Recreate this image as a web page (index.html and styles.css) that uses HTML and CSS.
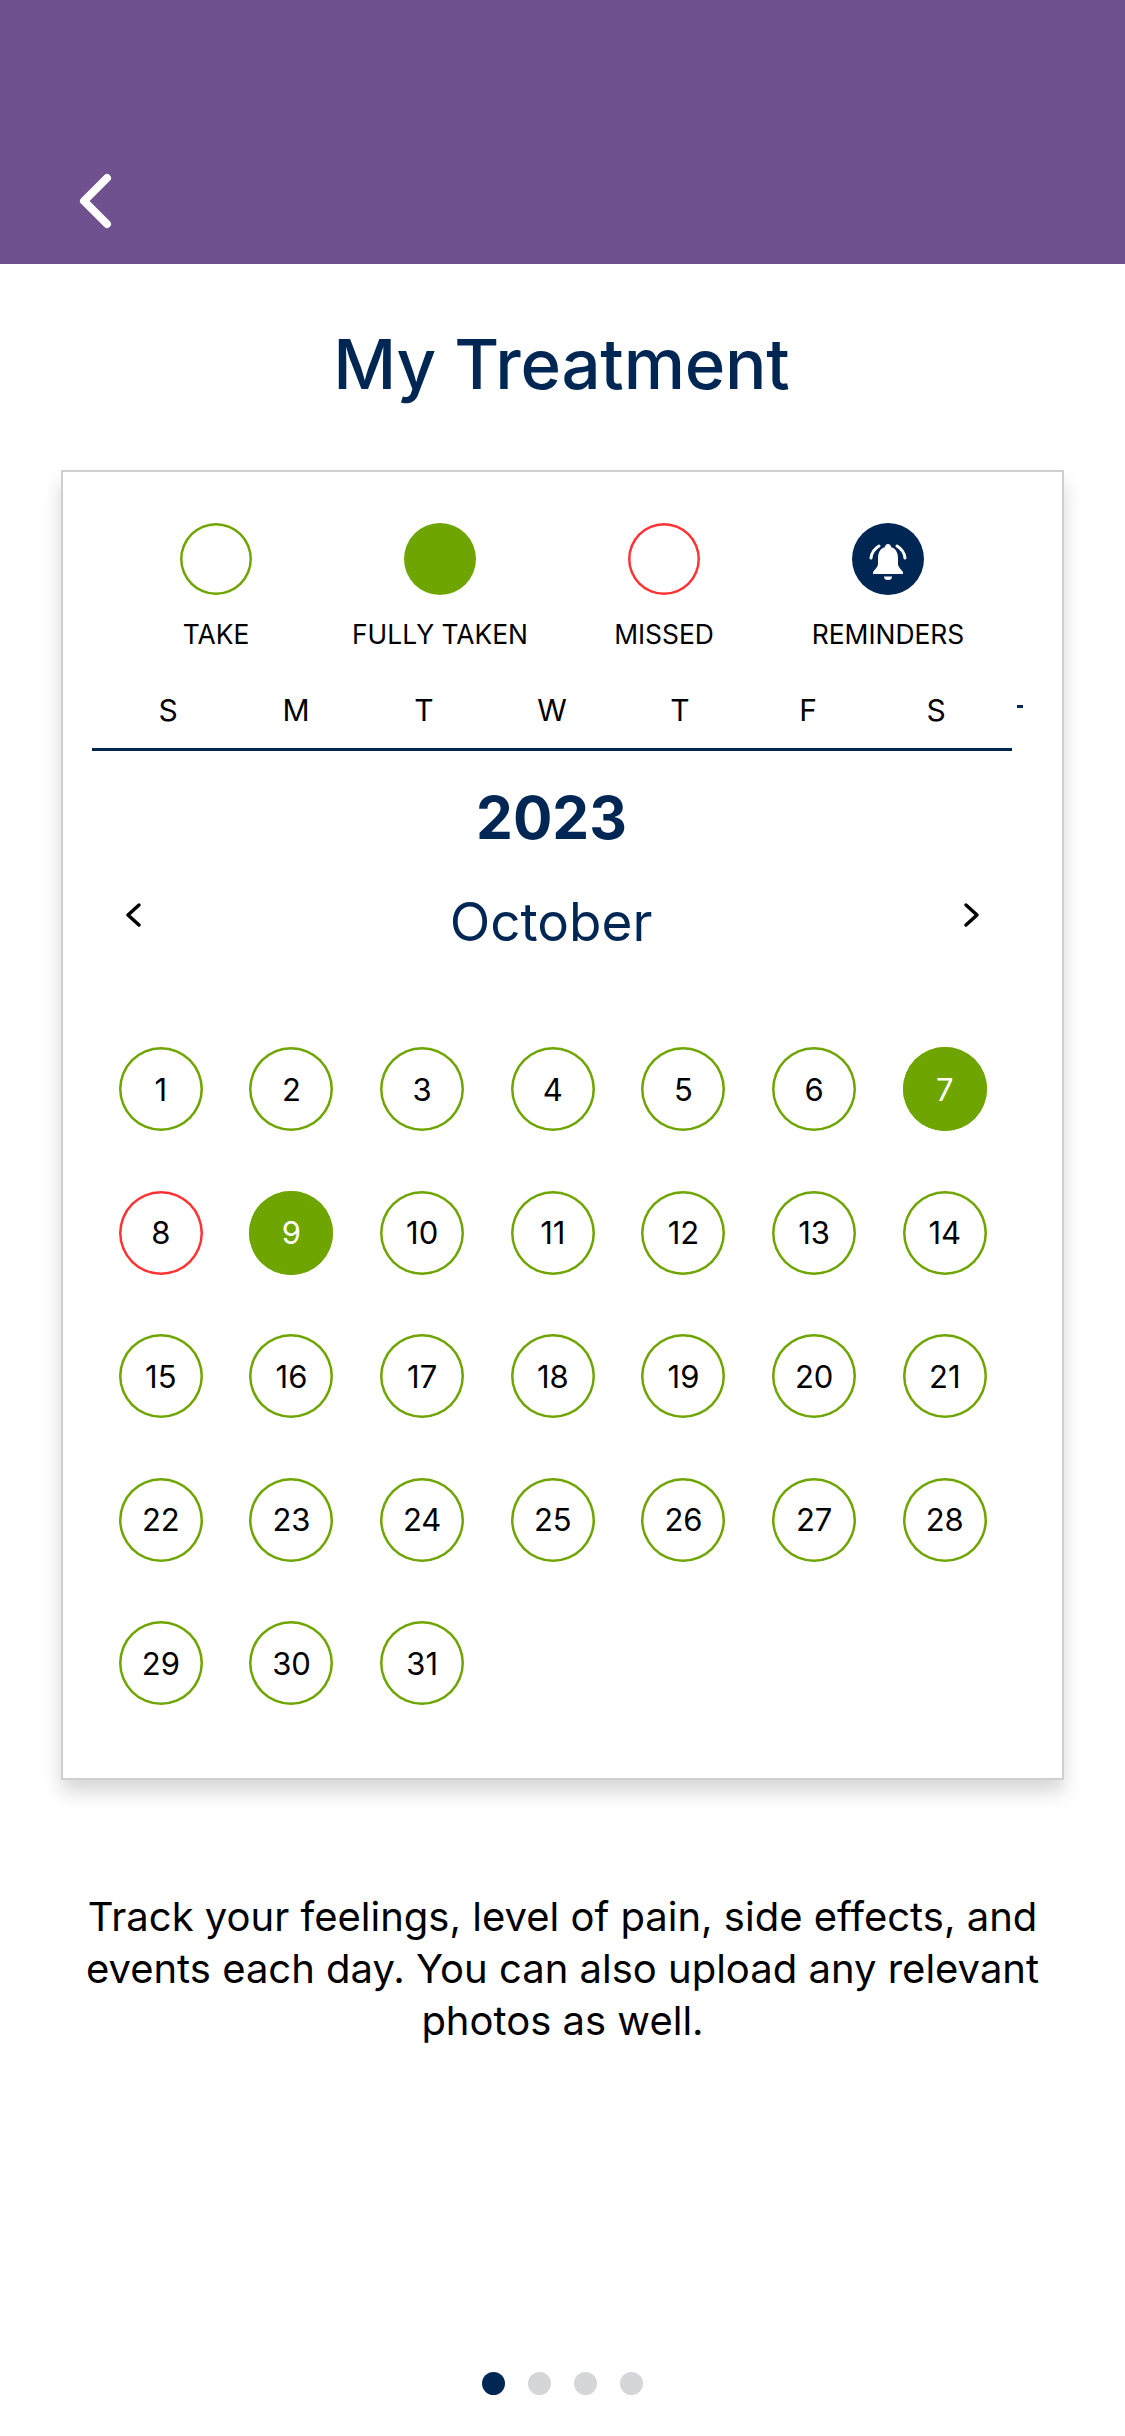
FILE: index.html
```html
<!DOCTYPE html>
<html lang="en">
<head>
  <meta charset="UTF-8">
  <meta name="viewport" content="width=device-width, initial-scale=1.0">
  <link rel="stylesheet" href="styles.css">
  <title>My Treatment</title>
</head>
<body>
  <header class="top-bar">
    <svg class="back-icon" width="34" height="56" viewBox="0 0 34 56">
      <path d="M28 5 L5 28 L28 51" fill="none" stroke="#fff" stroke-width="8" stroke-linecap="round" stroke-linejoin="round"/>
    </svg>
  </header>

  <h1 class="title">My Treatment</h1>

  <section class="card">
    <div class="legend">
      <div class="legend-item">
        <span class="legend-dot take"></span>
        <span class="legend-label">TAKE</span>
      </div>
      <div class="legend-item">
        <span class="legend-dot taken"></span>
        <span class="legend-label">FULLY TAKEN</span>
      </div>
      <div class="legend-item">
        <span class="legend-dot missed"></span>
        <span class="legend-label">MISSED</span>
      </div>
      <div class="legend-item">
        <span class="legend-dot reminder">
          <svg width="72" height="72" viewBox="0 0 72 72">
            <path d="M36 21c2 0 3 1.500 3 3c5 1.500 7 6 7 11v6c0 3 3 5 5 8v2H21v-2c2-3 5-5 5-8v-6c0-5 2-9.500 7-11c0-1.500 1-3 3-3z" fill="#fff"/>
            <path d="M32 53.500h8a4 3.500 0 0 1-8 0z" fill="#fff"/>
            <path d="M19 35c.5-5 3-9 8-12M53 35c-.5-5-3-9-8-12" fill="none" stroke="#fff" stroke-width="3" stroke-linecap="round"/>
          </svg>
        </span>
        <span class="legend-label">REMINDERS</span>
      </div>
    </div>

    <div class="weekdays">
      <span>S</span><span>M</span><span>T</span><span>W</span><span>T</span><span>F</span><span>S</span>
      <i class="week-dash"></i>
    </div>

    <div class="year">2023</div>
    <div class="month-row">
      <svg width="18" height="26" viewBox="0 0 18 26">
        <path d="M15 3 L4 13 L15 23" fill="none" stroke="#000" stroke-width="3.500" stroke-linecap="round" stroke-linejoin="round"/>
      </svg>
      <span class="month">October</span>
      <svg width="18" height="26" viewBox="0 0 18 26">
        <path d="M3 3 L14 13 L3 23" fill="none" stroke="#000" stroke-width="3.500" stroke-linecap="round" stroke-linejoin="round"/>
      </svg>
    </div>

    <div class="days">
      <span class="day">1</span><span class="day">2</span><span class="day">3</span><span class="day">4</span><span class="day">5</span><span class="day">6</span><span class="day done">7</span>
      <span class="day miss">8</span><span class="day done">9</span><span class="day">10</span><span class="day">11</span><span class="day">12</span><span class="day">13</span><span class="day">14</span>
      <span class="day">15</span><span class="day">16</span><span class="day">17</span><span class="day">18</span><span class="day">19</span><span class="day">20</span><span class="day">21</span>
      <span class="day">22</span><span class="day">23</span><span class="day">24</span><span class="day">25</span><span class="day">26</span><span class="day">27</span><span class="day">28</span>
      <span class="day">29</span><span class="day">30</span><span class="day">31</span>
    </div>
  </section>

  <p class="info">Track your feelings, level of pain, side effects, and events each day. You can also upload any relevant photos as well.</p>

  <div class="pager">
    <span class="pager-dot active"></span>
    <span class="pager-dot"></span>
    <span class="pager-dot"></span>
    <span class="pager-dot"></span>
  </div>
</body>
</html>
```

FILE: styles.css
```css
* {
  box-sizing: border-box;
}

body {
  margin: 0;
  width: 1125px;
  height: 2436px;
  overflow: hidden;
  background: #fff;
  color: #000;
  font-family: Inter, "Liberation Sans", sans-serif;
  display: flex;
  flex-direction: column;
  align-items: center;
}

.top-bar {
  width: 100%;
  height: 264px;
  flex-shrink: 0;
  background: #6f5190;
  padding: 173px 0 0 79px;
}

.back-icon {
  display: block;
}

.title {
  margin: 56px 0 0;
  height: 88px;
  padding-right: 2px;
  font-size: 69px;
  line-height: 88px;
  font-weight: 500;
  letter-spacing: -0.2px;
  color: #002654;
}

.card {
  width: 1003px;
  height: 1310px;
  margin-top: 62px;
  flex-shrink: 0;
  border: 2px solid #cfcfcf;
  background: #fff;
  box-shadow: 0 12px 18px rgba(0, 0, 0, 0.16);
  padding: 51px 0 0;
}

.legend {
  display: grid;
  grid-template-columns: repeat(4, 224px);
  padding-left: 41px;
}

.legend-item {
  display: flex;
  flex-direction: column;
  align-items: center;
}

.legend-dot {
  width: 72px;
  height: 72px;
  border-radius: 50%;
  display: block;
}

.take {
  box-shadow: inset 0 0 0 2.500px #6fa500;
}

.taken {
  background: #6fa500;
}

.missed {
  box-shadow: inset 0 0 0 2.500px #ff3333;
}

.reminder {
  background: #002654;
}

.reminder svg {
  display: block;
}

.legend-label {
  margin-top: 23px;
  font-size: 26.400px;
  line-height: 32px;
  white-space: nowrap;
}

.weekdays {
  position: relative;
  width: 920px;
  height: 59px;
  margin: 42px 0 0 29px;
  padding-left: 12px;
  border-bottom: 3px solid #002654;
  display: grid;
  grid-template-columns: repeat(7, 128px);
  font-size: 30px;
  line-height: 36px;
  text-align: center;
}

.week-dash {
  position: absolute;
  left: 925px;
  top: 13px;
  width: 6px;
  height: 3px;
  background: #002654;
}

.year {
  margin: 32px 0 0;
  width: 977px;
  text-align: center;
  font-size: 58.500px;
  line-height: 70px;
  font-weight: 700;
  color: #002654;
}

.month-row {
  width: 857px;
  margin: 38px 0 0 61px;
  display: flex;
  justify-content: space-between;
  align-items: flex-start;
}

.month-row svg {
  margin-top: 11px;
}

.month {
  margin-right: 3px;
  font-size: 53px;
  line-height: 62px;
  color: #002654;
}

.days {
  display: grid;
  grid-template-columns: repeat(7, 130.67px);
  grid-auto-rows: 143.5px;
  margin: 94px 0 0 32.500px;
}

.day {
  width: 84px;
  height: 84px;
  justify-self: center;
  box-shadow: inset 0 0 0 2.500px #6fa500;
  border-radius: 50%;
  display: flex;
  align-items: center;
  justify-content: center;
  font-size: 31px;
}

.day.done {
  background: #6fa500;
  color: #fff;
}

.day.miss {
  box-shadow: inset 0 0 0 2.500px #ff3333;
}

.info {
  width: 980px;
  margin: 111px 0 0;
  text-align: center;
  font-size: 40px;
  line-height: 52px;
}

.pager {
  margin-top: 325px;
  display: flex;
  gap: 23px;
}

.pager-dot {
  width: 23px;
  height: 23px;
  border-radius: 50%;
  background: #d5d6d8;
}

.pager-dot.active {
  background: #002654;
}
```
